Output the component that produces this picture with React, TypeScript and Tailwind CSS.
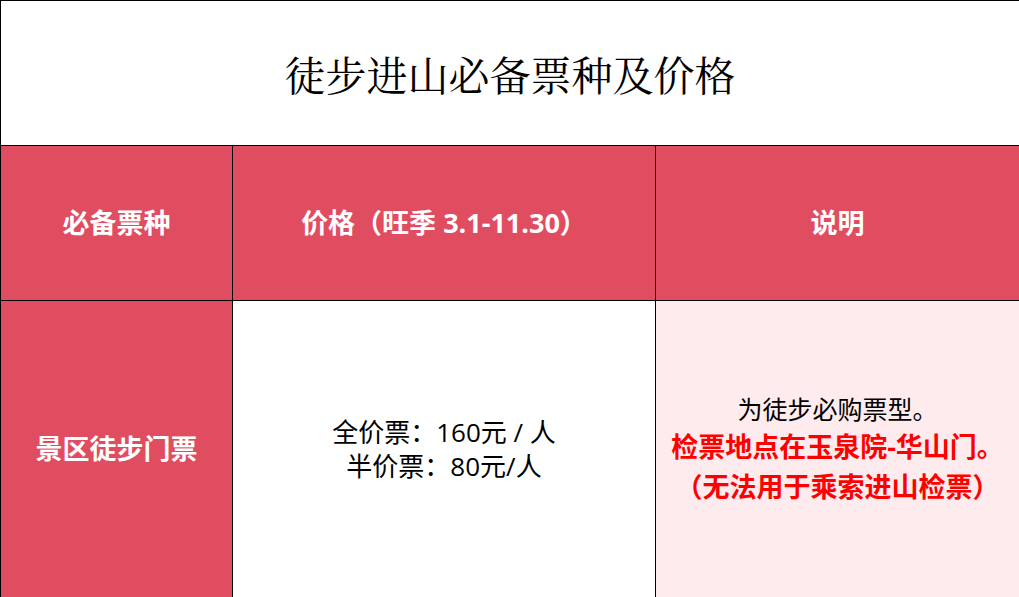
export default function App() {
  const sans = 'font-["Open_Sans","Microsoft_YaHei","Noto_Sans_CJK_SC",sans-serif]';
  return (
    <div className="w-[1019px] h-[597px] bg-white overflow-hidden">
      <table className="w-[1019px] h-[597px] border-collapse table-fixed">
        <colgroup>
          <col className="w-[232px]" />
          <col className="w-[423px]" />
          <col className="w-[364px]" />
        </colgroup>
        <tbody>
          <tr className="h-[145px]">
            <td
              colSpan={3}
              className='border border-black text-center text-[41px] pt-[2px] text-black font-["Noto_Serif_CJK_SC","SimSun","Noto_Sans_CJK_SC",serif] font-normal'
            >
              徒步进山必备票种及价格
            </td>
          </tr>
          <tr className="h-[155px] bg-[#e14d60] text-white">
            <td className={`border border-black text-center text-[27px] font-bold ${sans}`}>必备票种</td>
            <td className={`border border-black text-center text-[27px] font-bold ${sans}`}>价格（旺季 3.1-11.30）</td>
            <td className={`border border-black text-center text-[27px] font-bold ${sans}`}>说明</td>
          </tr>
          <tr className="h-[297px]">
            <td className={`border border-black bg-[#e14d60] text-white text-center text-[27px] font-bold ${sans}`}>
              景区徒步门票
            </td>
            <td className={`border border-black bg-white text-black text-center text-[26px] leading-[34px] ${sans}`}>
              <div>全价票：160元 / 人</div>
              <div>半价票：80元/人</div>
            </td>
            <td className={`border border-black bg-[#fdebee] text-center ${sans}`}>
              <div className="text-[25px] leading-[36px] text-black">为徒步必购票型。</div>
              <div className="text-[27px] leading-[40px] text-[#ff0000] font-bold">检票地点在玉泉院-华山门。</div>
              <div className="text-[27px] leading-[40px] text-[#ff0000] font-bold">（无法用于乘索进山检票）</div>
            </td>
          </tr>
        </tbody>
      </table>
    </div>
  );
}
